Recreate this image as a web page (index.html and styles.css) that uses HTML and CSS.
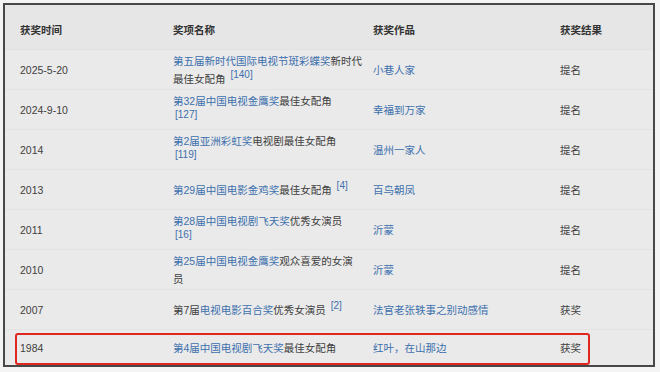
FILE: index.html
```html
<!DOCTYPE html>
<html lang="zh-CN">
<head>
<meta charset="utf-8">
<title>获奖记录</title>
<link rel="stylesheet" href="styles.css">
</head>
<body>
<div class="frame">
  <div class="row head">
    <div>获奖时间</div><div>奖项名称</div><div>获奖作品</div><div>获奖结果</div>
  </div>
  <div class="row">
    <div>2025-5-20</div>
    <div><a>第五届新时代国际电视节斑彩蝶奖</a>新时代<br>最佳女配角 <sup>[140]</sup></div>
    <div><a>小巷人家</a></div>
    <div>提名</div>
  </div>
  <div class="row">
    <div>2024-9-10</div>
    <div><a>第32届中国电视金鹰奖</a>最佳女配角<br><sup>[127]</sup></div>
    <div><a>幸福到万家</a></div>
    <div>提名</div>
  </div>
  <div class="row">
    <div>2014</div>
    <div><a>第2届亚洲彩虹奖</a>电视剧最佳女配角<br><sup>[119]</sup></div>
    <div><a>温州一家人</a></div>
    <div>提名</div>
  </div>
  <div class="row">
    <div>2013</div>
    <div><a>第29届中国电影金鸡奖</a>最佳女配角 <sup>[4]</sup></div>
    <div><a>百鸟朝凤</a></div>
    <div>提名</div>
  </div>
  <div class="row">
    <div>2011</div>
    <div><a>第28届中国电视剧飞天奖</a>优秀女演员<br><sup>[16]</sup></div>
    <div><a>沂蒙</a></div>
    <div>提名</div>
  </div>
  <div class="row">
    <div>2010</div>
    <div><a>第25届中国电视金鹰奖</a>观众喜爱的女演<br>员</div>
    <div><a>沂蒙</a></div>
    <div>提名</div>
  </div>
  <div class="row">
    <div>2007</div>
    <div>第7届<a>电视电影百合奖</a>优秀女演员 <sup>[2]</sup></div>
    <div><a>法官老张轶事之别动感情</a></div>
    <div>获奖</div>
  </div>
  <div class="row last">
    <div>1984</div>
    <div><a>第4届中国电视剧飞天奖</a>最佳女配角</div>
    <div><a>红叶，在山那边</a></div>
    <div>获奖</div>
  </div>
  <div class="highlight"></div>
</div>
</body>
</html>
```

FILE: styles.css
```css
html, body {
  margin: 0;
  padding: 0;
  background: #f4f4f4;
}
body {
  padding: 3px;
  font-family: "Liberation Sans", "Noto Sans CJK SC", sans-serif;
  font-size: 10.5px;
  line-height: 18px;
  color: #404040;
}
.frame {
  position: relative;
  width: 648px;
  height: 360px;
  border: 2px solid #484848;
  background: #e9e9e9;
  overflow: hidden;
  display: flex;
  flex-direction: column;
}
.row {
  display: grid;
  grid-template-columns: 153px 200px 187px 1fr;
  align-items: center;
  padding-left: 15px;
  height: 40px;
  flex: none;
  box-sizing: border-box;
  border-bottom: 1px solid #e2e2e2;
  background: #eaeaea;
}
.row.head {
  height: 45px;
  padding-top: 6px;
  font-weight: bold;
  color: #333;
  background: #e6e6e6;
}
.row.last {
  height: 35px;
  border-bottom: none;
}
a {
  color: #3d70ad;
  text-decoration: none;
}
sup {
  color: #3d70ad;
  font-size: 10px;
  line-height: 0;
  vertical-align: 5px;
  margin-left: 2px;
}
.highlight {
  position: absolute;
  left: 10px;
  top: 328px;
  width: 575px;
  height: 32px;
  box-sizing: border-box;
  border: 2.5px solid #e0271f;
  border-radius: 3px;
}
```
